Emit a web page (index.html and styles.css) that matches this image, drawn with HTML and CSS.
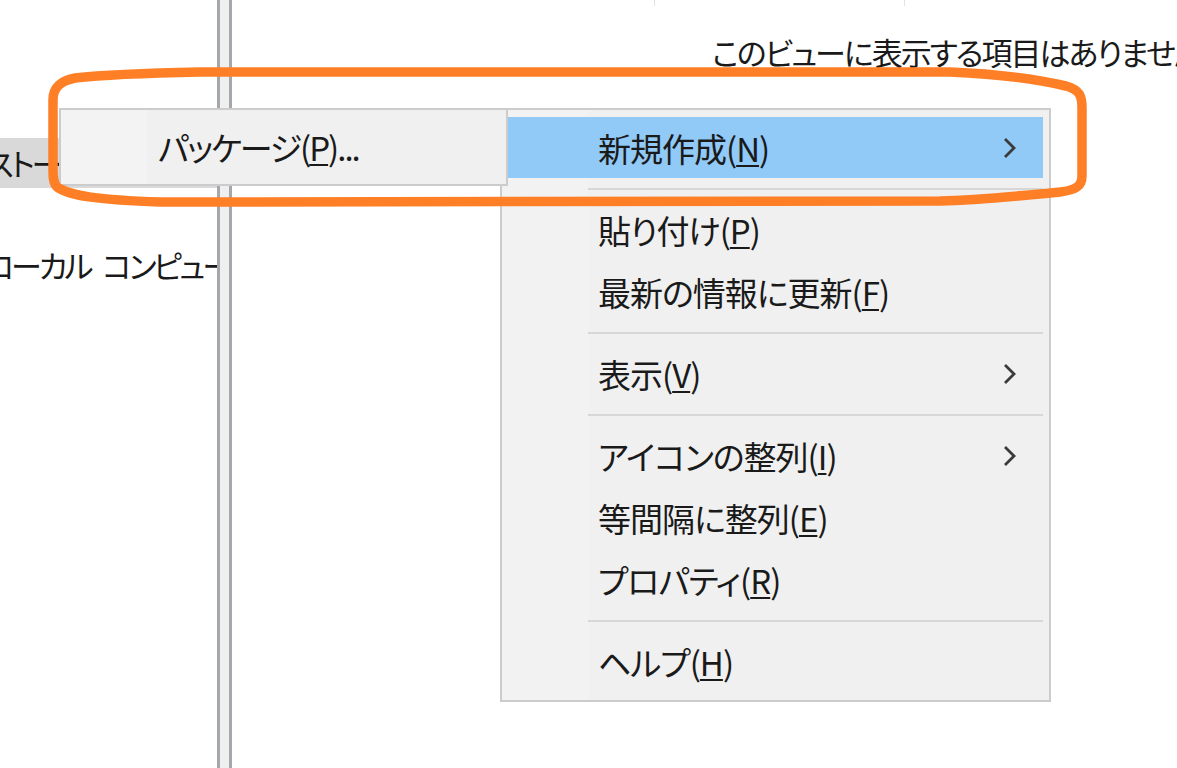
FILE: index.html
```html
<!DOCTYPE html>
<html lang="ja">
<head>
    <meta charset="UTF-8">
    <meta name="viewport" content="width=device-width, initial-scale=1.0">
    <title>コンテキスト メニュー</title>
    <link rel="stylesheet" href="styles.css">
</head>
<body>
    <div class="window">
        <div class="tree">
            <div class="tree-item selected"><span class="tree-text store">ストー</span></div>
            <div class="tree-item"><span class="tree-text local">ローカル コンピューター</span></div>
        </div>
        <div class="splitter"></div>
        <div class="list">
            <div class="list-header">
                <span class="col col-name"></span>
                <span class="col col-type"></span>
            </div>
            <p class="empty">このビューに表示する項目はありません。</p>
        </div>
    </div>

    <div class="menu context-menu">
        <div class="menu-item active">
            <span>新規作成(<u>N</u>)</span>
            <svg class="chevron" viewBox="0 0 14 22"><polyline points="2,2 11,11 2,20"/></svg>
        </div>
        <div class="separator"></div>
        <div class="menu-item"><span>貼り付け(<u>P</u>)</span></div>
        <div class="menu-item"><span>最新の情報に更新(<u>F</u>)</span></div>
        <div class="separator"></div>
        <div class="menu-item">
            <span>表示(<u>V</u>)</span>
            <svg class="chevron" viewBox="0 0 14 22"><polyline points="2,2 11,11 2,20"/></svg>
        </div>
        <div class="separator"></div>
        <div class="menu-item">
            <span>アイコンの整列(<u>I</u>)</span>
            <svg class="chevron" viewBox="0 0 14 22"><polyline points="2,2 11,11 2,20"/></svg>
        </div>
        <div class="menu-item"><span>等間隔に整列(<u>E</u>)</span></div>
        <div class="menu-item"><span>プロパティ(<u>R</u>)</span></div>
        <div class="separator"></div>
        <div class="menu-item"><span>ヘルプ(<u>H</u>)</span></div>
    </div>

    <div class="menu submenu">
        <div class="menu-item"><span>パッケージ(<u>P</u>)...</span></div>
    </div>

    <!-- 注釈の枠 -->
    <svg class="annotation" viewBox="0 0 1177 768">
        <path d="M 75 78 C 110 74, 150 73, 200 72 L 950 72 C 1000 74, 1040 80, 1066 86 C 1080 90, 1082 96, 1082 108 L 1082 176 C 1082 186, 1076 190, 1060 192 C 1020 196, 980 200, 940 201 L 160 202 C 100 200, 70 196, 57 187 C 53 183, 53 176, 53 168 L 53 100 C 53 88, 60 81, 75 78 Z"/>
    </svg>
</body>
</html>
```

FILE: styles.css
```css
* {
    box-sizing: border-box;
    margin: 0;
    padding: 0;
}

body {
    position: relative;
    width: 1177px;
    height: 768px;
    overflow: hidden;
    background-color: #ffffff;
    font-family: "Noto Sans CJK JP", "Noto Sans", sans-serif;
    font-feature-settings: "palt";
    font-size: 33px;
    color: #1a1a1a;
}

.window {
    display: flex;
    height: 768px;
}

/* 左側のツリー */
.tree {
    width: 217px;
    flex-shrink: 0;
    overflow: hidden;
    padding-top: 138px;
    display: flex;
    flex-direction: column;
    gap: 52px;
    font-size: 31px;
    letter-spacing: -3px;
    word-spacing: 8px;
}

.tree-item {
    height: 50px;
    line-height: 50px;
    white-space: nowrap;
}

.tree-item.selected {
    background-color: #d9d9d9;
}

.tree-text.store {
    margin-left: -14px;
}

.tree-text.local {
    margin-left: -16px;
}

.splitter {
    width: 15px;
    flex-shrink: 0;
    border-left: 3px solid #a4a8ad;
    border-right: 3px solid #a4a8ad;
    background-color: #efefef;
}

/* 右側の一覧 */
.list {
    flex: 1;
    overflow: hidden;
}

.list-header {
    display: flex;
    height: 6px;
}

.col {
    border-right: 1px solid #e2e2e2;
}

.col-name {
    width: 423px;
}

.col-type {
    width: 250px;
}

.empty {
    margin-top: 26px;
    padding-left: 480px;
    line-height: 40px;
    font-size: 31px;
    letter-spacing: -2px;
    white-space: nowrap;
}

/* メニュー */
.menu {
    position: absolute;
    top: 108px;
    background-color: #f0f0f0;
    border: 2px solid #cccccc;
    padding: 7px 6px;
    letter-spacing: -1px;
}

.context-menu {
    left: 500px;
    width: 551px;
    background: linear-gradient(to right, #f2f2f2 0 87px, #f0f0f0 87px);
}

.submenu {
    left: 59px;
    width: 449px;
    padding: 6px;
    background: linear-gradient(to right, #f3f3f3 0 86px, #f0f0f0 86px);
}

.menu-item {
    height: 62px;
    display: flex;
    align-items: center;
    justify-content: space-between;
    padding: 0 26px 0 90px;
    white-space: nowrap;
}

.submenu .menu-item {
    padding-left: 91px;
    letter-spacing: -2px;
}

.menu-item.active {
    height: 61px;
    margin-bottom: 1px;
    background-color: #91c9f7;
}

.menu-item u {
    text-decoration-thickness: 2px;
    text-underline-offset: 3px;
}

.chevron {
    width: 14px;
    height: 22px;
    fill: none;
    stroke: #3a3a3a;
    stroke-width: 2.8;
}

.separator {
    height: 20px;
    display: flex;
    align-items: center;
    padding-left: 80px;
}

.separator::after {
    content: "";
    flex: 1;
    height: 2px;
    background-color: #d7d7d7;
}

.annotation {
    position: absolute;
    top: 0;
    left: 0;
    width: 1177px;
    height: 768px;
    pointer-events: none;
    fill: none;
    stroke: #ff7f27;
    stroke-width: 9.5;
    stroke-linejoin: round;
}
```
